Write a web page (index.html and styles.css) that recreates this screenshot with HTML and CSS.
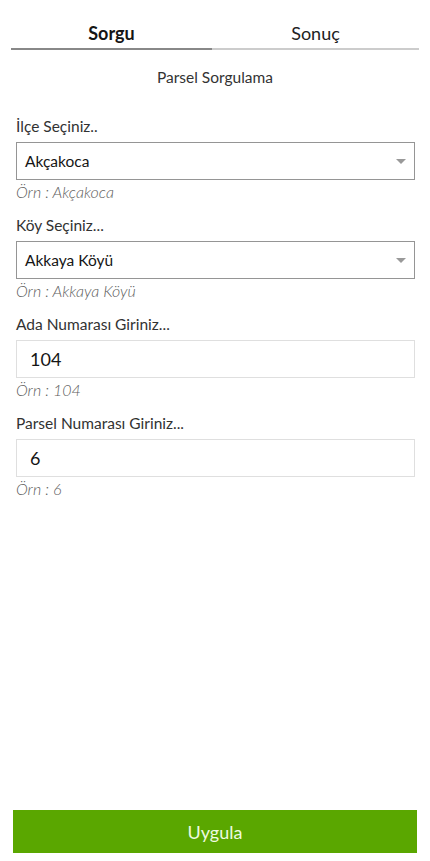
FILE: index.html
```html
<!DOCTYPE html>
<html lang="tr">
<head>
<meta charset="utf-8">
<link rel="stylesheet" href="styles.css">
</head>
<body>
<div class="app">
  <div class="tabs">
    <div class="tab active">Sorgu</div>
    <div class="tab">Sonuç</div>
  </div>
  <div class="title">Parsel Sorgulama</div>
  <div class="form">
    <div class="field">
      <div class="label">İlçe Seçiniz..</div>
      <div class="select"><span>Akçakoca</span><span class="arrow"></span></div>
      <div class="hint">Örn : Akçakoca</div>
    </div>
    <div class="field">
      <div class="label">Köy Seçiniz...</div>
      <div class="select"><span>Akkaya Köyü</span><span class="arrow"></span></div>
      <div class="hint">Örn : Akkaya Köyü</div>
    </div>
    <div class="field">
      <div class="label">Ada Numarası Giriniz...</div>
      <div class="input">104</div>
      <div class="hint">Örn : 104</div>
    </div>
    <div class="field">
      <div class="label">Parsel Numarası Giriniz...</div>
      <div class="input">6</div>
      <div class="hint">Örn : 6</div>
    </div>
  </div>
  <div class="spacer"></div>
  <div class="button">Uygula</div>
</div>
</body>
</html>
```
FILE: styles.css
```css
html, body {
  margin: 0;
  padding: 0;
  background: #fff;
}
body {
  font-family: Lato, "Noto Sans", sans-serif;
  color: #323232;
}
.app {
  height: 861px;
  display: flex;
  flex-direction: column;
  box-sizing: border-box;
  padding: 0 13px 8px 13px;
}
.tabs {
  display: flex;
  margin: 0 -2px;
  padding-top: 21px;
}
.tab {
  flex: 1;
  text-align: center;
  font-size: 18px;
  line-height: 24px;
  padding-bottom: 3px;
  border-bottom: 2px solid #ccc;
  color: #222;
}
.tab.active {
  flex: 0 0 201px;
  font-weight: 700;
  border-bottom-color: #888;
  color: #151515;
}
.title {
  text-align: center;
  font-size: 15.5px;
  line-height: 18px;
  margin-top: 18px;
  color: #333;
}
.form {
  margin-top: 31px;
  padding: 0 2px 0 3px;
}
.field {
  display: flex;
  flex-direction: column;
}
.label {
  font-size: 15.5px;
  line-height: 18px;
  color: #323232;
  margin-bottom: 7px;
}
.select, .input {
  height: 38px;
  box-sizing: border-box;
  display: flex;
  align-items: center;
  justify-content: space-between;
}
.select {
  border: 1px solid #959595;
  padding: 0 8px 0 8px;
  font-size: 15.5px;
  color: #151515;
}
.arrow {
  width: 0;
  height: 0;
  border-left: 5px solid transparent;
  border-right: 5px solid transparent;
  border-top: 5px solid #999;
}
.input {
  border: 1px solid #dfdfdf;
  padding: 0 13px;
  font-size: 18px;
  color: #151515;
}
.hint {
  font-size: 16px;
  font-style: italic;
  font-weight: 300;
  color: #606060;
  line-height: 18px;
  margin-top: 3px;
  margin-bottom: 15px;
}
.spacer {
  flex: 1;
}
.button {
  height: 43px;
  background: #5aa700;
  color: #eefae0;
  font-size: 18px;
  display: flex;
  align-items: center;
  justify-content: center;
}
```
